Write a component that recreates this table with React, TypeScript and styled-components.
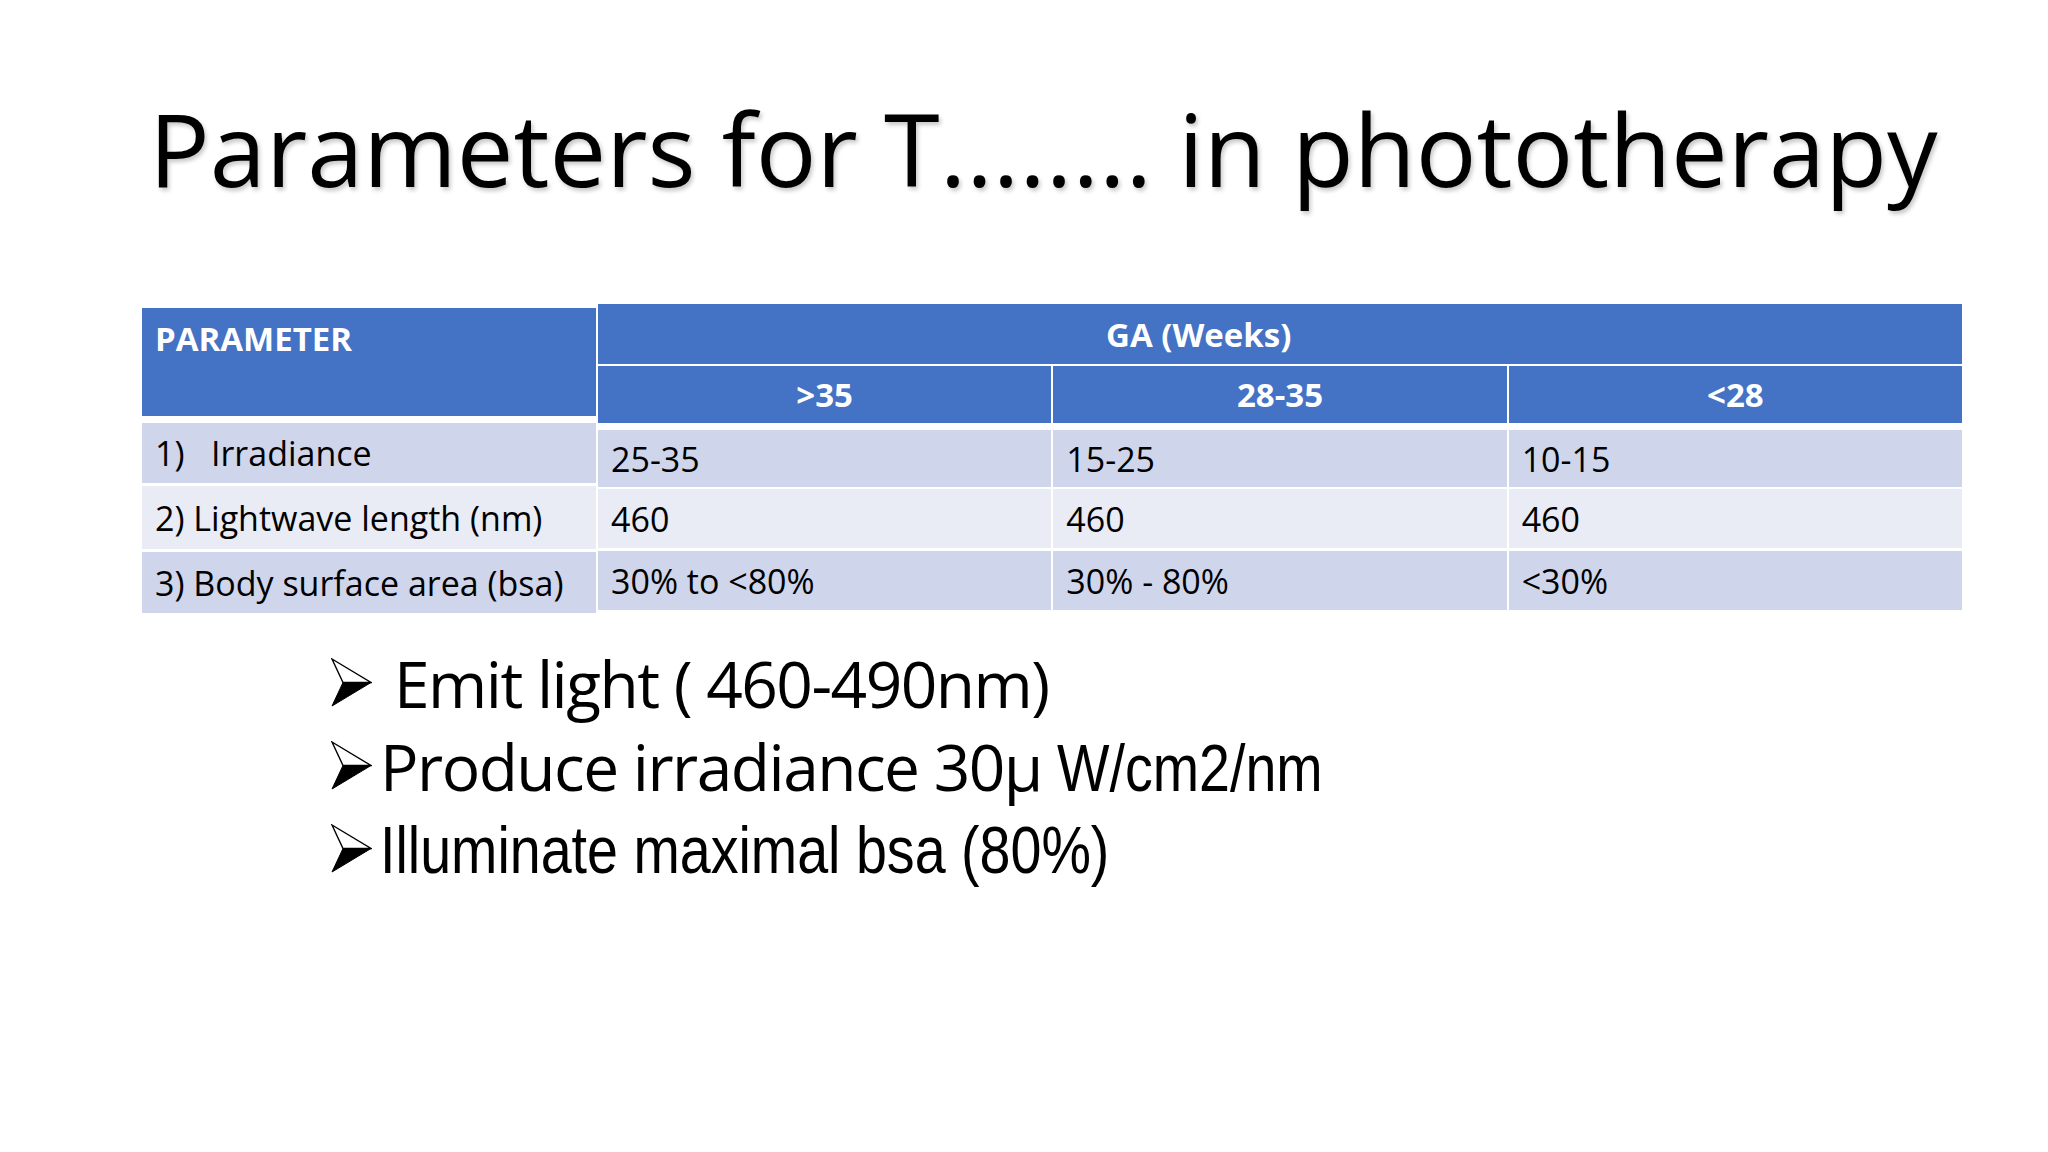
import React from "react";
import styled, { createGlobalStyle } from "styled-components";

const GlobalStyle = createGlobalStyle`
  html, body { margin: 0; padding: 0; background: #ffffff; }
  body { font-family: "Open Sans", "Noto Sans", sans-serif; }
`;

const HEADER = "#4472C4";
const ODD = "#CFD5EA";
const EVEN = "#E9EBF5";

const Slide = styled.div`
  width: 2048px;
  height: 1152px;
  background: #ffffff;
  display: flex;
  flex-direction: column;
  overflow: hidden;
`;

const Title = styled.h1`
  margin: 0;
  padding: 79px 0 0 149px;
  font-family: "Open Sans", sans-serif;
  font-weight: 400;
  font-size: 101px;
  line-height: 138px;
  color: #000000;
  white-space: nowrap;
  text-shadow: 2px 3px 4px rgba(0, 0, 0, 0.22);
`;

const Tables = styled.div`
  display: flex;
  align-items: flex-start;
  gap: 2px;
  margin: 87px 0 0 142px;
`;

const LeftTable = styled.div`
  width: 454px;
  margin-top: 4px;
  display: flex;
  flex-direction: column;
`;

const RightTable = styled.div`
  width: 1364px;
  display: flex;
  flex-direction: column;
`;

const Row = styled.div<{ $h: number; $mt: number }>`
  display: grid;
  grid-template-columns: repeat(3, 1fr);
  column-gap: 2px;
  height: ${(p) => p.$h}px;
  margin-top: ${(p) => p.$mt}px;
`;

const Cell = styled.div<{ $bg: string; $h?: number; $mt?: number; $head?: boolean; $center?: boolean }>`
  background: ${(p) => p.$bg};
  height: ${(p) => (p.$h ? `${p.$h}px` : "100%")};
  margin-top: ${(p) => p.$mt ?? 0}px;
  box-sizing: border-box;
  padding: 0 13px;
  display: flex;
  align-items: center;
  justify-content: ${(p) => (p.$center ? "center" : "flex-start")};
  font-family: "Open Sans", sans-serif;
  font-size: ${(p) => (p.$head ? 33 : 34)}px;
  font-weight: ${(p) => (p.$head ? 700 : 400)};
  color: ${(p) => (p.$head ? "#ffffff" : "#000000")};
  white-space: pre;
`;

const ParamHead = styled(Cell)`
  align-items: flex-start;
  padding-top: 8px;
`;

const GaHead = styled(Cell)`
  padding-left: 508px;
`;

const Bullets = styled.div`
  margin-top: 29px;
  padding-left: 331px;
  display: flex;
  flex-direction: column;
`;

const BulletRow = styled.div<{ $gap: number }>`
  display: flex;
  align-items: center;
  height: 83px;
  gap: ${(p) => p.$gap}px;
`;

const ArrowSvg = styled.svg`
  width: 41px;
  height: 49px;
  flex: none;
  margin-bottom: 3px;
`;

const Text = styled.span`
  font-family: "Open Sans", sans-serif;
  font-size: 64px;
  letter-spacing: -1.5px;
  font-weight: 400;
  color: #000000;
  white-space: nowrap;
`;

const Narrow = styled.span`
  display: inline-block;
  font-family: "Liberation Sans", Arial, sans-serif;
  font-size: 67px;
  letter-spacing: 0;
  font-weight: 400;
  color: #000000;
  white-space: nowrap;
  transform: scaleX(0.83);
  transform-origin: left center;
`;

const Arrow = () => (
  <ArrowSvg viewBox="0 0 41 49">
    <polygon points="1,1 40,24.5 12,24.5" fill="#ffffff" stroke="#000000" strokeWidth="1.4" strokeLinejoin="miter" />
    <polygon points="12,24.5 40,24.5 1,48" fill="#000000" stroke="#000000" strokeWidth="1" />
  </ArrowSvg>
);

const rows = [
  { label: "1)   Irradiance", values: ["25-35", "15-25", "10-15"], bg: ODD, hL: 60, mL: 7, hR: 57, mR: 7 },
  { label: "2) Lightwave length (nm)", values: ["460", "460", "460"], bg: EVEN, hL: 63, mL: 3, hR: 59, mR: 2 },
  { label: "3) Body surface area (bsa)", values: ["30% to <80%", "30% - 80%", "<30%"], bg: ODD, hL: 61, mL: 3, hR: 59, mR: 3 },
];

export default function App() {
  return (
    <>
      <GlobalStyle />
      <Slide>
        <Title>Parameters for T........ in phototherapy</Title>
        <Tables>
          <LeftTable>
            <ParamHead $bg={HEADER} $h={108} $head>PARAMETER</ParamHead>
            {rows.map((r) => (
              <Cell key={r.label} $bg={r.bg} $h={r.hL} $mt={r.mL}>
                {r.label}
              </Cell>
            ))}
          </LeftTable>
          <RightTable>
            <GaHead $bg={HEADER} $h={60} $head>GA (Weeks)</GaHead>
            <Row $h={57} $mt={2}>
              {[">35", "28-35", "<28"].map((h) => (
                <Cell key={h} $bg={HEADER} $head $center>
                  {h}
                </Cell>
              ))}
            </Row>
            {rows.map((r) => (
              <Row key={r.label} $h={r.hR} $mt={r.mR}>
                {r.values.map((v, i) => (
                  <Cell key={i} $bg={r.bg}>
                    {v}
                  </Cell>
                ))}
              </Row>
            ))}
          </RightTable>
        </Tables>
        <Bullets>
          <BulletRow $gap={22}>
            <Arrow />
            <Text>Emit light ( 460-490nm)</Text>
          </BulletRow>
          <BulletRow $gap={8}>
            <Arrow />
            <Text>
              Produce irradiance 30μ <Narrow>W/cm2/nm</Narrow>
            </Text>
          </BulletRow>
          <BulletRow $gap={8}>
            <Arrow />
            <Narrow>Illuminate maximal bsa (80%)</Narrow>
          </BulletRow>
        </Bullets>
      </Slide>
    </>
  );
}
